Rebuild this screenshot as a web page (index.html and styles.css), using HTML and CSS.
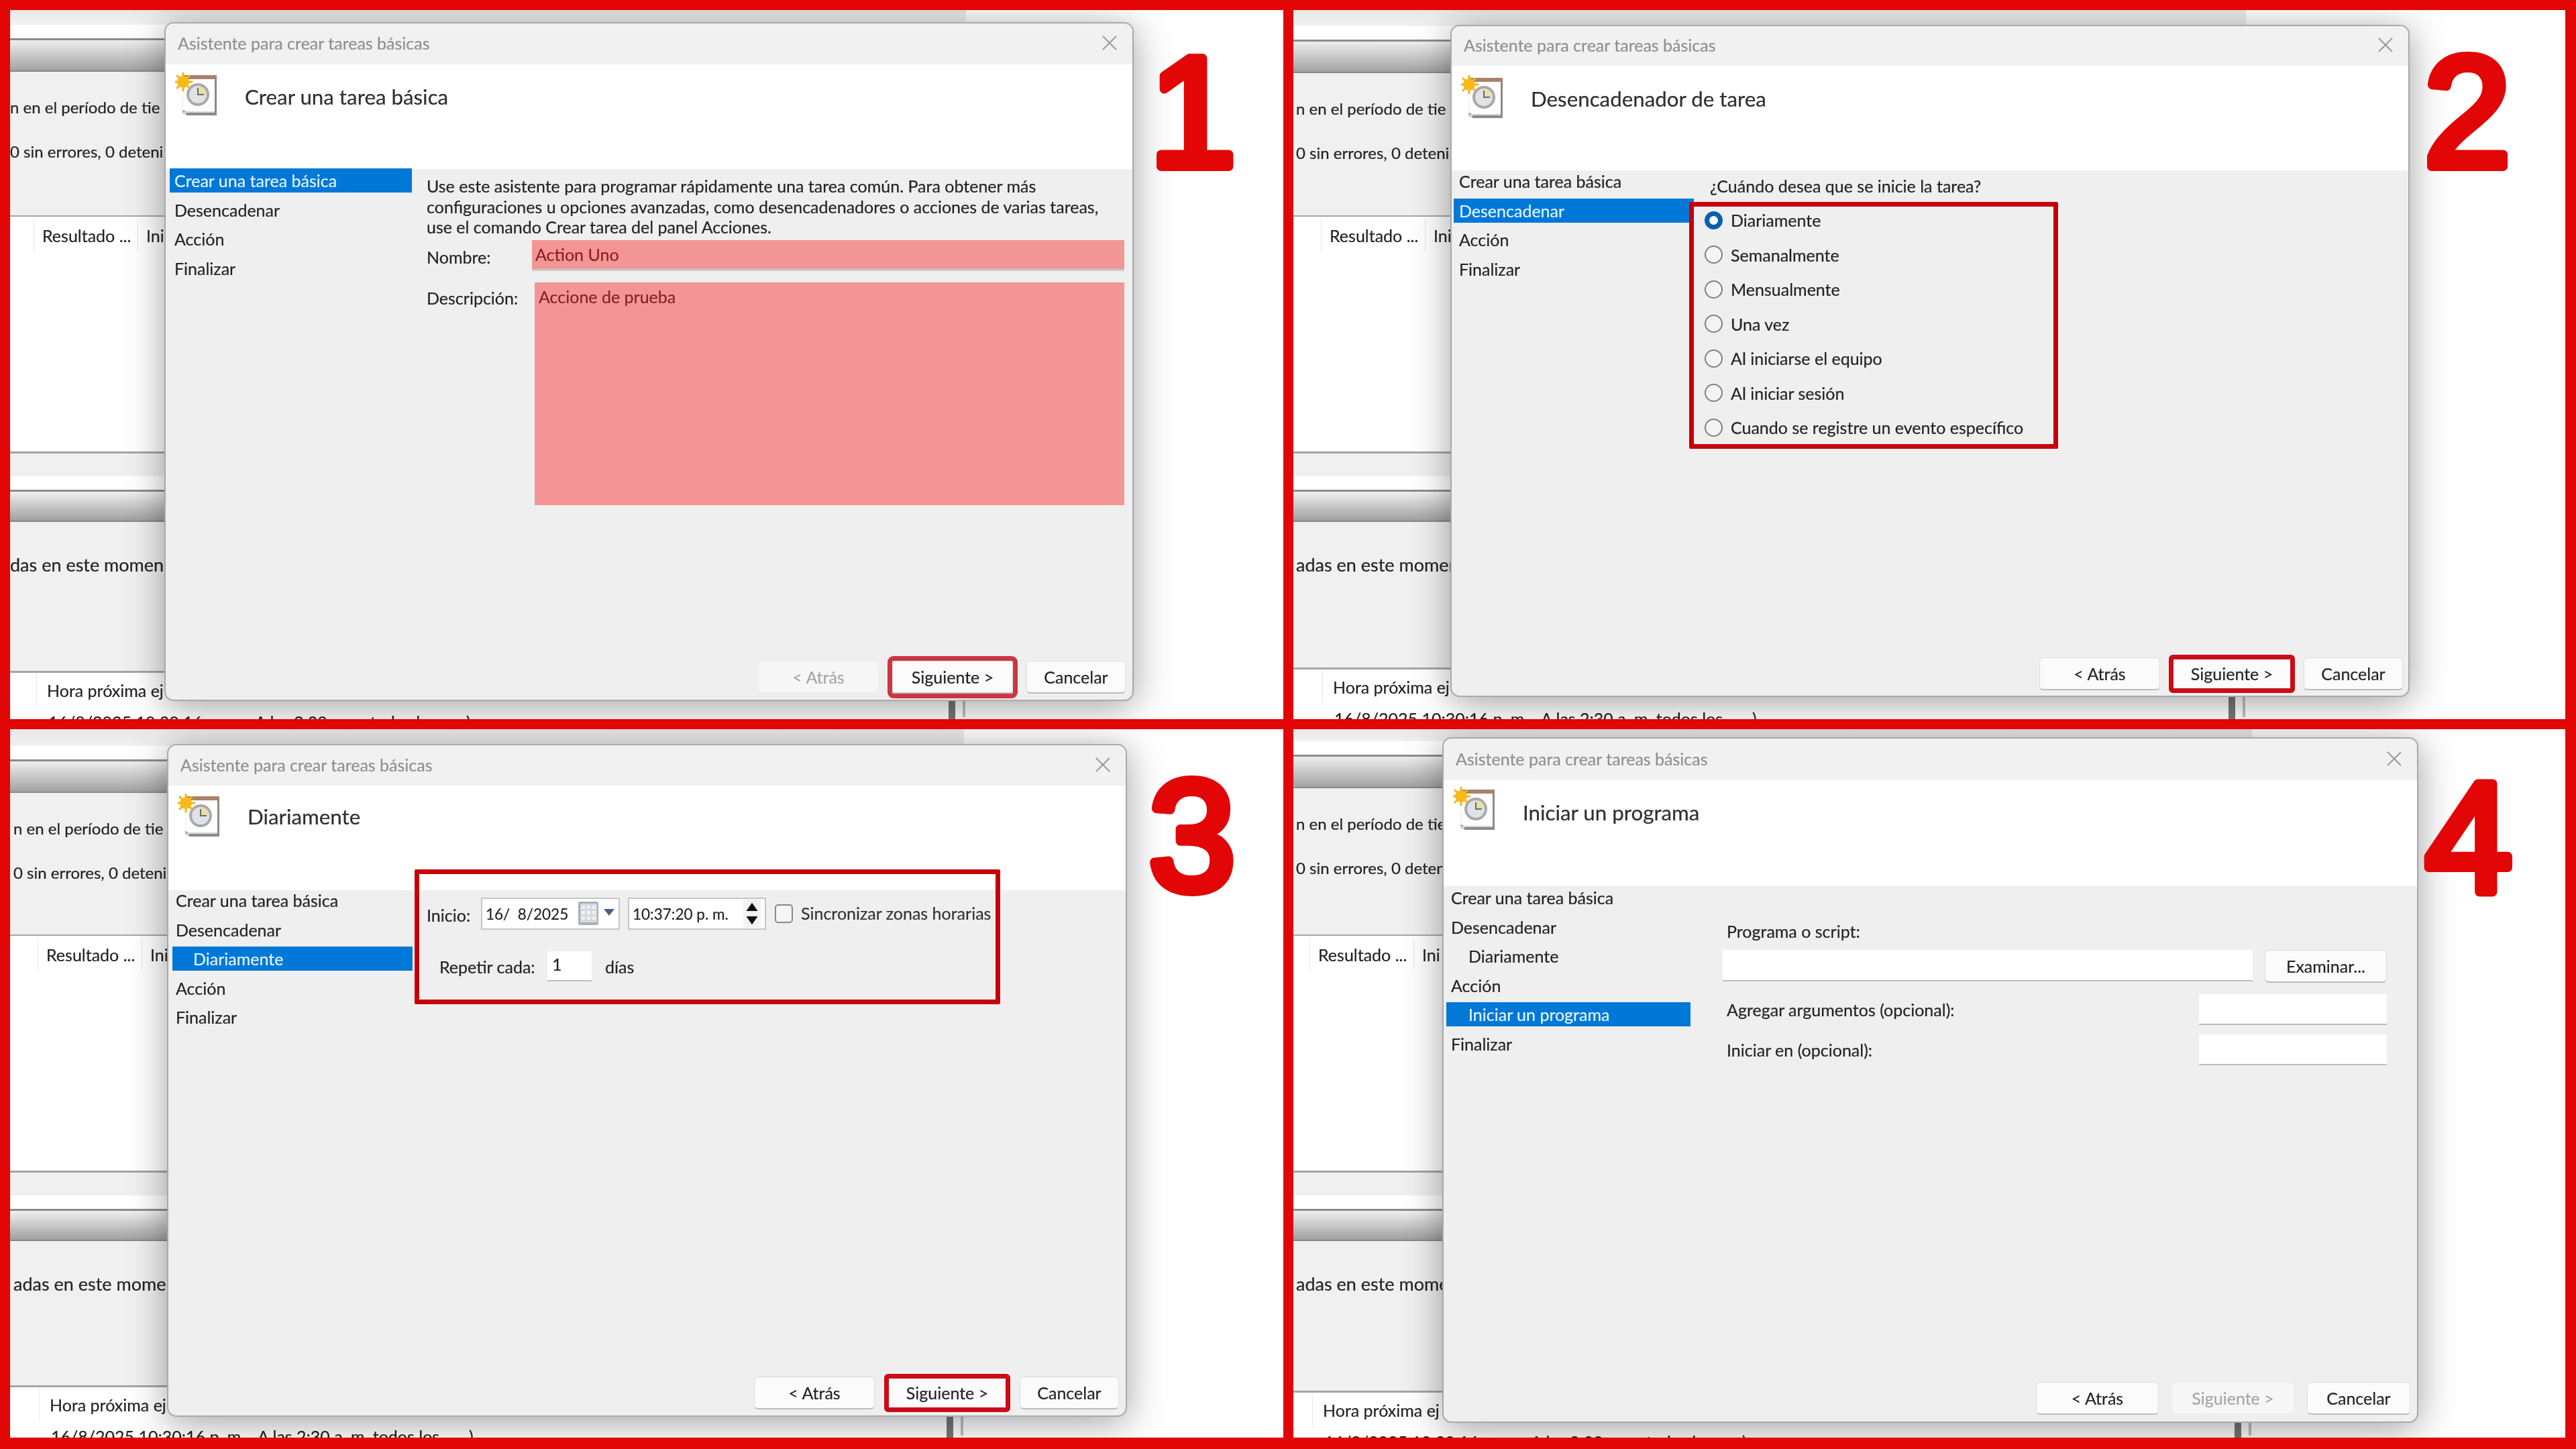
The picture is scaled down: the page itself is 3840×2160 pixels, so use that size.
FILE: index.html
```html
<!DOCTYPE html>
<html lang="es">
<head>
<meta charset="utf-8">
<title>Asistente para crear tareas básicas</title>
<link rel="stylesheet" href="styles.css">
</head>
<body>
<svg class="defs" width="0" height="0" aria-hidden="true">
  <symbol id="task" viewBox="0 0 64 66">
    <path d="M13 6H62V64H17L11 60Z" fill="#8f8985"/>
    <path d="M13 9H59V58H17L11 56Z" fill="#fdfdfd"/>
    <path d="M10 58L17 64V60L59 60V58H16Z" fill="#d8d4d0"/>
    <rect x="13" y="4" width="49" height="6" fill="#a8836c"/>
    <circle cx="34" cy="33" r="17" fill="#a9a9a9"/>
    <circle cx="34" cy="33" r="13" fill="#dfe3e8"/>
    <path d="M34 20A13 13 0 0 1 47 33H34Z" fill="#e6dfae"/>
    <path d="M34 23V33H43" fill="none" stroke="#6f6a55" stroke-width="2"/>
    <g stroke="#f6b21c" stroke-width="3" stroke-linecap="round">
      <path d="M12 1V27M0 14H25M3 5L21 23M21 5L3 23"/>
    </g>
    <circle cx="12" cy="14" r="9" fill="#fbb917"/>
  </symbol>
  <symbol id="close" viewBox="0 0 22 22">
    <path d="M1 1L21 21M21 1L1 21" fill="none" stroke="#9a9a9a" stroke-width="2"/>
  </symbol>
</svg>

<main class="board">

  <section class="panel p1">
    <div class="win">
      <div class="w-top"></div><div class="w-white"></div><div class="w-bar"></div>
      <div class="w-mid"><p>n en el período de tie</p><p>0 sin errores, 0 deteni</p></div>
      <div class="w-list"><div class="cols"><span class="c1">Resultado ...</span><span class="c2">Ini</span></div></div>
      <div class="w-grey"></div><div class="w-white"></div><div class="w-bar2"></div>
      <div class="w-low"><p>das en este momen</p></div>
      <div class="w-end">
        <div class="cols2"><span class="c3">Hora próxima ej</span></div>
        <div class="cells"><span class="c4">16/8/2025 10:30:16 p. m.</span><span class="c5">A las 2:30 a. m. todos los</span><span>)</span></div>
      </div>
      <i class="thumb"></i>
    </div>
    <div class="dlg d1">
      <header class="dlg-title"><span>Asistente para crear tareas básicas</span><svg class="x"><use href="#close"/></svg></header>
      <div class="dlg-head"><svg class="ico"><use href="#task"/></svg><h1>Crear una tarea básica</h1></div>
      <div class="dlg-body">
        <nav class="nav">
          <div class="it on">Crear una tarea básica</div><div class="it">Desencadenar</div><div class="it">Acción</div><div class="it">Finalizar</div>
        </nav>
        <div class="pane pane1">
          <p class="intro">Use este asistente para programar rápidamente una tarea común. Para obtener más<br>configuraciones u opciones avanzadas, como desencadenadores o acciones de varias tareas,<br>use el comando Crear tarea del panel Acciones.</p>
          <div class="fld"><label>Nombre:</label><div class="pink one">Action Uno</div></div>
          <div class="fld area"><label>Descripción:</label><div class="pink big">Accione de prueba</div></div>
        </div>
      </div>
      <footer class="dlg-foot">
        <div class="btn off">&lt; Atrás</div><div class="btn mark">Siguiente &gt;</div><div class="btn cancel">Cancelar</div>
      </footer>
    </div>
    <svg class="num n1" viewBox="0 0 200 240"><text x="100" y="220">1</text></svg>
  </section>

  <section class="panel p2">
    <div class="win">
      <div class="w-top"></div><div class="w-white"></div><div class="w-bar"></div>
      <div class="w-mid"><p>n en el período de tie</p><p>0 sin errores, 0 deteni</p></div>
      <div class="w-list"><div class="cols"><span class="c1">Resultado ...</span><span class="c2">Ini</span></div></div>
      <div class="w-grey"></div><div class="w-white"></div><div class="w-bar2"></div>
      <div class="w-low"><p>adas en este momen</p></div>
      <div class="w-end">
        <div class="cols2"><span class="c3">Hora próxima ej</span></div>
        <div class="cells"><span class="c4">16/8/2025 10:30:16 p. m.</span><span class="c5">A las 2:30 a. m. todos los</span><span>)</span></div>
      </div>
      <i class="thumb"></i>
    </div>
    <div class="dlg d2">
      <header class="dlg-title"><span>Asistente para crear tareas básicas</span><svg class="x"><use href="#close"/></svg></header>
      <div class="dlg-head"><svg class="ico"><use href="#task"/></svg><h1>Desencadenador de tarea</h1></div>
      <div class="dlg-body">
        <nav class="nav">
          <div class="it">Crear una tarea básica</div><div class="it on">Desencadenar</div><div class="it">Acción</div><div class="it">Finalizar</div>
        </nav>
        <div class="pane">
          <p class="ask">¿Cuándo desea que se inicie la tarea?</p>
          <div class="framed radios">
            <div class="radio sel"><i></i>Diariamente</div>
            <div class="radio"><i></i>Semanalmente</div>
            <div class="radio"><i></i>Mensualmente</div>
            <div class="radio"><i></i>Una vez</div>
            <div class="radio"><i></i>Al iniciarse el equipo</div>
            <div class="radio"><i></i>Al iniciar sesión</div>
            <div class="radio"><i></i>Cuando se registre un evento específico</div>
          </div>
        </div>
      </div>
      <footer class="dlg-foot">
        <div class="btn">&lt; Atrás</div><div class="btn mark">Siguiente &gt;</div><div class="btn cancel">Cancelar</div>
      </footer>
    </div>
    <svg class="num n2" viewBox="0 0 200 240"><text x="100" y="220">2</text></svg>
  </section>

  <section class="panel p3">
    <div class="win">
      <div class="w-top"></div><div class="w-white"></div><div class="w-bar"></div>
      <div class="w-mid"><p>n en el período de tie</p><p>0 sin errores, 0 deteni</p></div>
      <div class="w-list"><div class="cols"><span class="c1">Resultado ...</span><span class="c2">Ini</span></div></div>
      <div class="w-grey"></div><div class="w-white"></div><div class="w-bar2"></div>
      <div class="w-low"><p>adas en este momen</p></div>
      <div class="w-end">
        <div class="cols2"><span class="c3">Hora próxima ej</span></div>
        <div class="cells"><span class="c4">16/8/2025 10:30:16 p. m.</span><span class="c5">A las 2:30 a. m. todos los</span><span>)</span></div>
      </div>
      <i class="thumb"></i>
    </div>
    <div class="dlg d3">
      <header class="dlg-title"><span>Asistente para crear tareas básicas</span><svg class="x"><use href="#close"/></svg></header>
      <div class="dlg-head"><svg class="ico"><use href="#task"/></svg><h1>Diariamente</h1></div>
      <div class="dlg-body">
        <nav class="nav">
          <div class="it">Crear una tarea básica</div><div class="it">Desencadenar</div><div class="it sub on">Diariamente</div><div class="it">Acción</div><div class="it">Finalizar</div>
        </nav>
        <div class="pane">
          <div class="framed sched">
            <div class="row r1">
              <span class="lab-ini">Inicio:</span>
              <div class="box date"><span class="val">16/  8/2025</span>
                <svg class="cal" viewBox="0 0 32 37"><rect x="1" y="1" width="30" height="35" rx="3" fill="#aab0b8"/><rect x="4" y="4" width="25" height="28" fill="#d5d9de"/><g fill="#f0f2f4"><rect x="6" y="7" width="5" height="5"/><rect x="14" y="7" width="5" height="5"/><rect x="22" y="7" width="5" height="5"/><rect x="6" y="15" width="5" height="5"/><rect x="14" y="15" width="5" height="5"/><rect x="22" y="15" width="5" height="5"/><rect x="6" y="23" width="5" height="5"/><rect x="14" y="23" width="5" height="5"/><rect x="22" y="23" width="5" height="5"/></g></svg>
                <svg class="drop" viewBox="0 0 16 10"><path d="M0 0H16L8 10Z" fill="#4a5f80"/></svg>
              </div>
              <div class="box time"><span class="val">10:37:20 p. m.</span>
                <svg class="spin" viewBox="0 0 34 54"><rect width="34" height="54" fill="#f3f3f3"/><path d="M17 6L28 22H6Z" fill="#111"/><path d="M17 48L28 32H6Z" fill="#111"/></svg>
              </div>
              <i class="check"></i><span class="sync">Sincronizar zonas horarias</span>
            </div>
            <div class="row r2">
              <span class="lab-rep">Repetir cada:</span><div class="num-in">1</div><span>días</span>
            </div>
          </div>
        </div>
      </div>
      <footer class="dlg-foot">
        <div class="btn">&lt; Atrás</div><div class="btn mark">Siguiente &gt;</div><div class="btn cancel">Cancelar</div>
      </footer>
    </div>
    <svg class="num n3" viewBox="0 0 200 240"><text x="100" y="220">3</text></svg>
  </section>

  <section class="panel p4">
    <div class="win">
      <div class="w-top"></div><div class="w-white"></div><div class="w-bar"></div>
      <div class="w-mid"><p>n en el período de tie</p><p>0 sin errores, 0 deteni</p></div>
      <div class="w-list"><div class="cols"><span class="c1">Resultado ...</span><span class="c2">Ini</span></div></div>
      <div class="w-grey"></div><div class="w-white"></div><div class="w-bar2"></div>
      <div class="w-low"><p>adas en este momen</p></div>
      <div class="w-end">
        <div class="cols2"><span class="c3">Hora próxima ej</span></div>
        <div class="cells"><span class="c4">16/8/2025 10:30:16 p. m.</span><span class="c5">A las 2:30 a. m. todos los</span><span>)</span></div>
      </div>
      <i class="thumb"></i>
    </div>
    <div class="dlg d4">
      <header class="dlg-title"><span>Asistente para crear tareas básicas</span><svg class="x"><use href="#close"/></svg></header>
      <div class="dlg-head"><svg class="ico"><use href="#task"/></svg><h1>Iniciar un programa</h1></div>
      <div class="dlg-body">
        <nav class="nav">
          <div class="it">Crear una tarea básica</div><div class="it">Desencadenar</div><div class="it sub">Diariamente</div><div class="it">Acción</div><div class="it sub on">Iniciar un programa</div><div class="it">Finalizar</div>
        </nav>
        <div class="pane pane4">
          <p class="pl">Programa o script:</p>
          <div class="prog"><div class="inp grow"></div><div class="btn browse">Examinar...</div></div>
          <div class="opt"><span>Agregar argumentos (opcional):</span><div class="inp short"></div></div>
          <div class="opt o2"><span>Iniciar en (opcional):</span><div class="inp short"></div></div>
        </div>
      </div>
      <footer class="dlg-foot">
        <div class="btn">&lt; Atrás</div><div class="btn off">Siguiente &gt;</div><div class="btn cancel">Cancelar</div>
      </footer>
    </div>
    <svg class="num n4" viewBox="0 0 200 240"><text x="100" y="220">4</text></svg>
  </section>

</main>
</body>
</html>
```
FILE: styles.css
```css
* { box-sizing: border-box; }
html, body { margin: 0; padding: 0; background: #fff; }
body { font-family: "Lato", "Open Sans", sans-serif; font-size: 25px; color: #232323; -webkit-text-stroke: .2px currentColor; }
p, h1 { margin: 0; font-weight: 400; }
.defs { position: absolute; }

.board {
  width: 3840px; height: 2160px;
  background: #e20606;
  display: grid;
  grid-template-columns: 1898px 1896px;
  grid-template-rows: 1057px 1056px;
  gap: 15px;
  padding: 15px 16px 17px 15px;
  filter: blur(.7px);
}
.panel { position: relative; overflow: hidden; background: #fff; }

/* window behind the dialogs */
.p1 { --top: 22px; --mid: 216px; --low: 225px; --winw: 1425px; --tx: 0px; --rx: 47px; --hx: 54px; }
.p2 { --top: 24px; --mid: 214px; --low: 220px; --winw: 1420px; --tx: 4px; --rx: 53px; --hx: 58px; }
.p3 { --top: 25px; --mid: 213px; --low: 218px; --winw: 1422px; --tx: 5px; --rx: 53px; --hx: 58px; }
.p4 { --top: 18px; --mid: 220px; --low: 226px; --winw: 1429px; --tx: 4px; --rx: 36px; --hx: 43px; }

.win { position: relative; width: var(--winw); height: 100%; display: flex; flex-direction: column; }
.w-top { height: var(--top); background: linear-gradient(#e8e8e8, #f1f1f1); flex: none; }
.w-white { height: 20px; background: #fff; flex: none; }
.w-bar { height: 50px; flex: none; border-top: 3px solid #8c8c8c; border-bottom: 2px solid #8a8a8a; background: linear-gradient(#eeeeee, #a2a2a2); }
.w-bar2 { height: 48px; flex: none; border-top: 3px solid #8c8c8c; background: linear-gradient(#f0f0f0, #a0a0a0); border-bottom: 2px solid #888; }
.w-mid { height: var(--mid); flex: none; background: #f0f0f0; padding: 38px 0 0 var(--tx); display: flex; flex-direction: column; gap: 36px; border-bottom: 2px solid #a5a5a5; line-height: 30px; white-space: nowrap; font-size: 24px; }
.w-list { height: 353px; flex: none; background: #fff; border-bottom: 3px solid #a5a5a5; }
.cols { display: flex; height: 52px; align-items: center; padding-left: calc(var(--rx) - 12px); padding-top: 4px; }
.c1 { width: 155px; padding-left: 12px; border-left: 1px solid #e8e8e8; line-height: 50px; white-space: nowrap; }
.c2 { padding-left: 12px; border-left: 1px solid #e8e8e8; line-height: 50px; }
.w-grey { height: 34px; flex: none; background: #f0f0f0; }
.w-low { height: var(--low); flex: none; background: #f0f0f0; border-bottom: 3px solid #a5a5a5; padding: 49px 0 0 var(--tx); line-height: 30px; white-space: nowrap; font-size: 27px; }
.w-end { flex: 1; background: #fff; min-height: 0; }
.cols2 { height: 52px; display: flex; align-items: center; padding-left: calc(var(--hx) - 15px); }
.c3 { border-left: 1px solid #e8e8e8; padding-left: 15px; line-height: 50px; white-space: nowrap; }
.cells { display: flex; padding: 6px 0 0 calc(var(--hx) + 3px); line-height: 30px; white-space: nowrap; }
.c4 { width: 308px; }
.c5 { width: 315px; }
.thumb { position: absolute; right: 16px; bottom: 0; width: 10px; height: 48px; background: #777; box-shadow: 18px 0 0 -3px #c0c0c0; }

/* dialog window */
.dlg {
  position: absolute;
  display: flex; flex-direction: column;
  background: #efefef;
  border: 2px solid #a9a9a9;
  border-radius: 14px;
  box-shadow: 0 8px 56px rgba(0,0,0,.38);
  overflow: hidden;
}
.d1 { left: 230px; top: 18px; width: 1445px; height: 1012px; --tb: 61px; --hh: 156px; --nl: 6px; --nw: 361px; --np: 7px; --nt: -1px; --fp: 9px; --fg: 20px; --hy: 16px; --ip: 12px; --fr: 10px; --bw: 180px; --cw: 148px; }
.d2 { left: 234px; top: 22px; width: 1430px; height: 1002px; --tb: 59px; --hh: 156px; --nl: 3px; --nw: 358px; --np: 8px; --nt: -2px; --fp: 8px; --fg: 17px; --hy: 15px; --ip: 14px; --fr: 8px; --bw: 180px; --cw: 148px; }
.d3 { left: 234px; top: 22px; width: 1431px; height: 1003px; --tb: 60px; --hh: 156px; --nl: 6px; --nw: 358px; --np: 5px; --nt: -3px; --fp: 9px; --fg: 18px; --hy: 14px; --ip: 12px; --fr: 10px; --bw: 180px; --cw: 148px; }
.d4 { left: 222px; top: 12px; width: 1455px; height: 1022px; --tb: 62px; --hh: 158px; --nl: 4px; --nw: 364px; --np: 7px; --nt: -1px; --fp: 10px; --fg: 19px; --hy: 18px; --ip: 10px; --fr: 10px; --bw: 183px; --cw: 154px; }

.dlg-title { height: var(--tb); flex: none; background: #f1f1f1; display: flex; justify-content: space-between; align-items: center; padding: 0 23px 3px 18px; color: #8f8f8f; }
.x { width: 22px; height: 22px; }
.dlg-head { height: var(--hh); flex: none; background: #fff; display: flex; align-items: flex-start; padding: var(--ip) 0 0 14px; }
.ico { width: 64px; height: 66px; flex: none; }
.dlg-head h1 { font-size: 31.3px; line-height: 40px; margin: var(--hy) 0 0 40px; color: #2f2f2f; }
.dlg-body { flex: 1; display: flex; min-height: 0; }
.nav { width: var(--nw); margin: var(--nt) 0 0 var(--nl); flex: none; display: flex; flex-direction: column; gap: 7.6px; }
.it { height: 36px; line-height: 36px; padding-left: var(--np); }
.it.sub { padding-left: calc(var(--np) + 26px); }
.it.on { background: #0078d7; color: #e4f3ff; }
.pane { flex: 1; min-width: 0; }
.dlg-foot { flex: none; display: flex; justify-content: flex-end; gap: var(--fg); padding: 0 var(--fr) var(--fp) 0; }
.btn { width: var(--bw); height: 49px; line-height: 47px; text-align: center; background: #fbfbfb; border: 1px solid #dcdcdc; border-bottom: 2px solid #bdbdbd; border-radius: 6px; }
.btn.off { color: #a6a6a6; background: #f6f6f6; border-color: #ebebeb; }
.btn.cancel { width: var(--cw); }
.btn.mark { outline: 7px solid #c90c16; outline-offset: -3px; border-radius: 2px; }
.d1 .btn.mark { outline-color: #cd3540; outline-offset: 0; }

/* panel 1 form */
.pane1 { padding: 10px 12px 0 22px; }
.intro { line-height: 30.5px; white-space: nowrap; }
.fld { display: flex; align-items: flex-start; }
.fld label { width: 157px; flex: none; padding-top: 14px; line-height: 30px; }
.fld.area label { padding-top: 8px; }
.pink { flex: 1; background: #f39595; color: #8a1f22; }
.one { height: 43px; line-height: 42px; padding-left: 5px; margin-top: 4px; box-shadow: 0 3px 0 #c9c9c9; }
.area { margin-top: 20px; }
.big { height: 332px; margin-left: 4px; padding: 6px 0 0 6px; line-height: 30px; }

/* panel 2 radios */
.ask { margin-left: 24px; padding-top: 8px; line-height: 30px; }
.framed { border: 7px solid #c6000a; border-radius: 2px; position: relative; }
.radios { width: 550px; height: 368px; margin: 9px 0 0 -7px; padding: 5px 0 0 16px; display: flex; flex-direction: column; gap: 21.5px; background: #efefef; }
.radio { display: flex; align-items: center; height: 30px; white-space: nowrap; }
.radio i { width: 27px; height: 27px; border-radius: 50%; border: 2px solid #7f7f7f; margin-right: 12px; flex: none; background: #f4f4f4; }
.radio.sel i { border: 7px solid #0b5fae; background: #fff; }

/* panel 3 schedule */
.sched { width: 873px; height: 201px; margin: -31px 0 0 3px; padding: 35px 0 0 11px; }
.row { display: flex; align-items: center; white-space: nowrap; }
.r1 { height: 48px; }
.lab-ini { width: 81px; padding-top: 4px; }
.box { height: 48px; background: #fff; border: 2px solid #c6c6c6; display: flex; align-items: center; padding-left: 5px; position: relative; }
.val { white-space: pre; font-size: 22.5px; }
.date { width: 207px; }
.time { width: 206px; margin-left: 12px; }
.cal { width: 32px; height: 37px; position: absolute; left: 142px; top: 3px; }
.drop { width: 16px; height: 10px; position: absolute; left: 181px; top: 15px; }
.spin { width: 34px; height: 42px; position: absolute; right: 2px; top: 1px; }
.check { width: 27px; height: 28px; border: 2px solid #8a8a8a; border-radius: 5px; margin: 0 12px 0 13px; background: #f6f6f6; flex: none; }
.sync { color: #333; padding-bottom: 2px; }
.r2 { margin: 32px 0 0 19px; height: 45px; }
.lab-rep { width: 161px; }
.num-in { width: 66px; height: 45px; line-height: 38px; background: #fff; padding-left: 7px; margin-right: 20px; border-bottom: 2px solid #bdbdbd; }

/* panel 4 program */
.pane4 { padding: 52px 45px 0 48px; }
.pl { padding-left: 6px; line-height: 30px; }
.prog { display: flex; gap: 18px; margin-top: 13px; }
.inp { height: 47px; background: #fff; border-bottom: 2px solid #bdbdbd; }
.grow { flex: 1; }
.btn.browse { width: 182px; }
.opt { display: flex; justify-content: space-between; align-items: center; padding-left: 6px; margin-top: 17px; }
.o2 { margin-top: 14px; }
.short { width: 280px; height: 46px; }

/* step numerals */
.num { position: absolute; width: 200px; height: 240px; overflow: visible; }
.num text { font-family: "Liberation Sans", sans-serif; font-size: 233px; fill: #e20606; stroke: #e20606; stroke-width: 14px; stroke-linejoin: round; text-anchor: middle; }
.n1 { left: 1663px; top: 13px; }
.n2 { left: 1650px; top: 13px; }
.n3 { left: 1662px; top: 20px; }
.n4 { left: 1652px; top: 22px; }
```
